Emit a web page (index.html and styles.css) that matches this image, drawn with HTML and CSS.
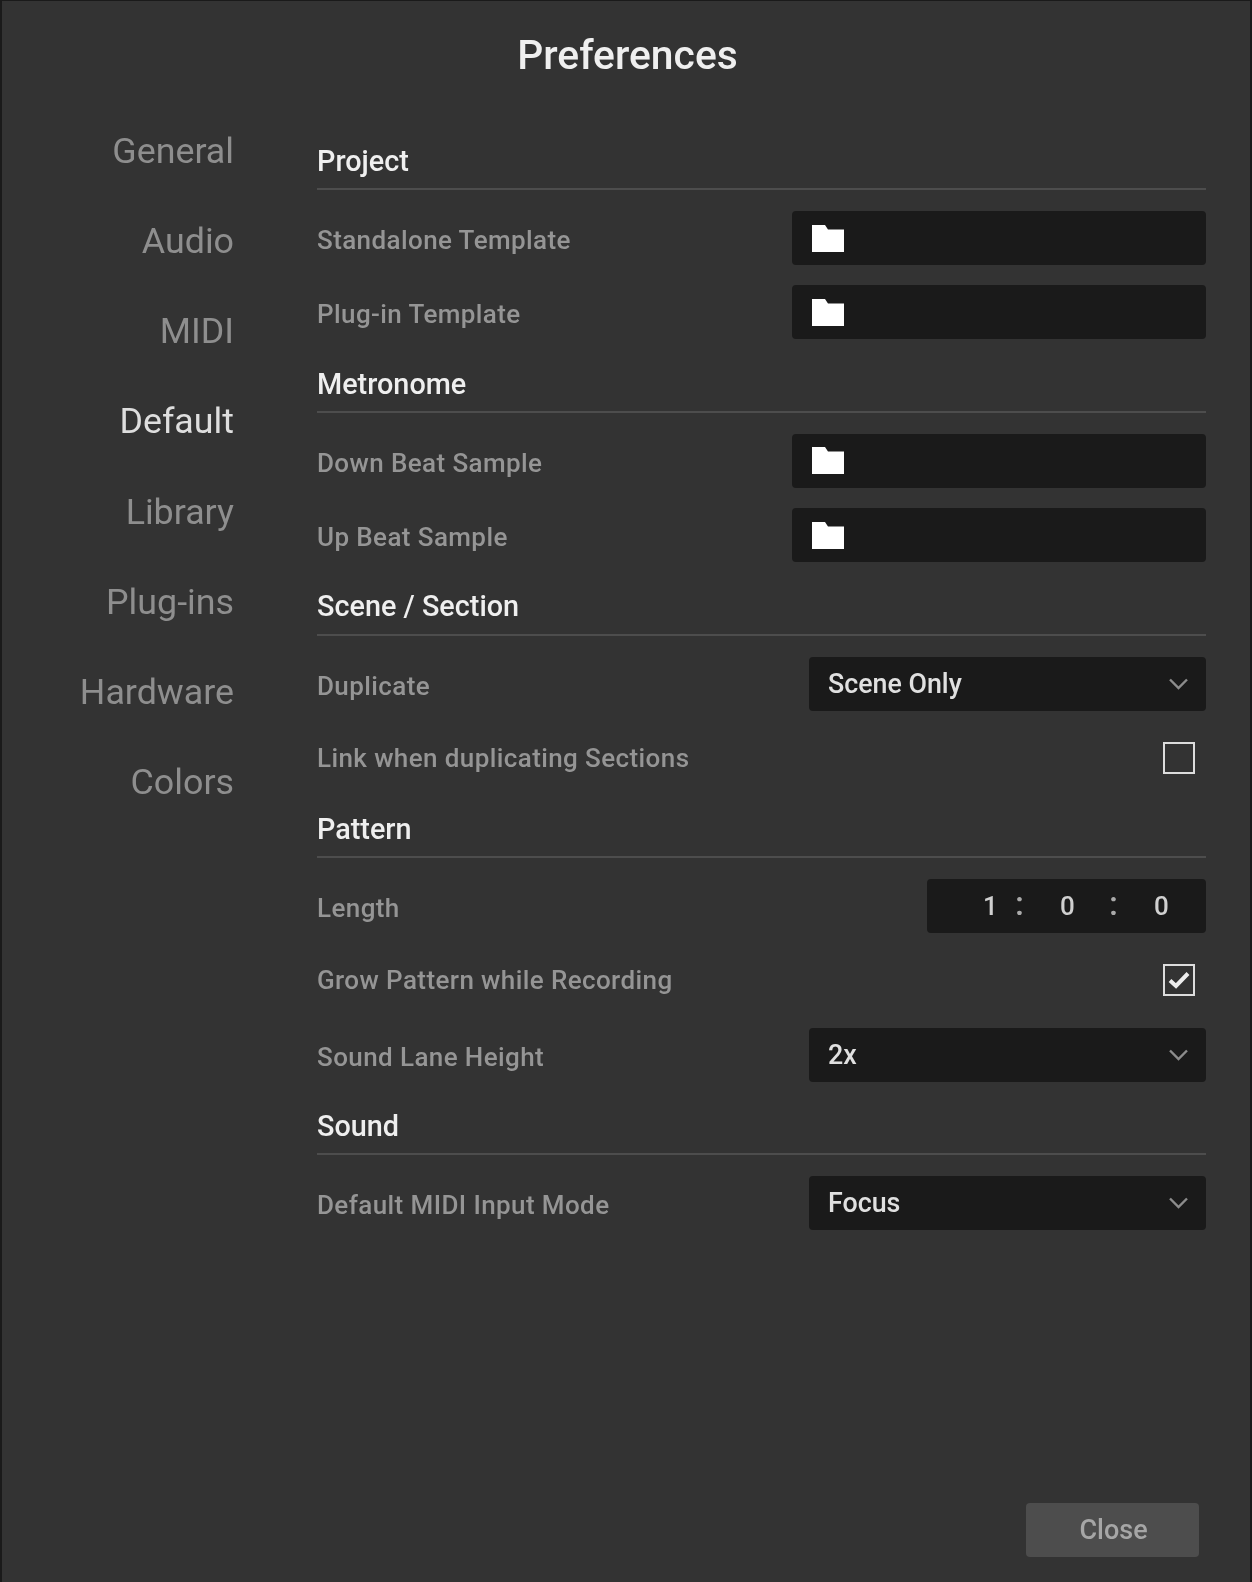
FILE: index.html
```html
<!DOCTYPE html>
<html lang="en">
<head>
<meta charset="utf-8">
<title>Preferences</title>
<link rel="stylesheet" href="styles.css">
</head>
<body>
<div class="dialog">
  <h1 class="title">Preferences</h1>
  <div class="body">
    <nav class="nav">
      <a class="nav-item">General</a>
      <a class="nav-item">Audio</a>
      <a class="nav-item">MIDI</a>
      <a class="nav-item active">Default</a>
      <a class="nav-item">Library</a>
      <a class="nav-item">Plug-ins</a>
      <a class="nav-item">Hardware</a>
      <a class="nav-item">Colors</a>
    </nav>
    <main class="content">
      <section class="section">
        <h2 class="heading">Project</h2>
        <div class="row"><span class="label low">Standalone Template</span><div class="field path"><svg class="folder" viewBox="0 0 32 27"><path d="M0 0H13L16 4.500H32V27H0Z"/></svg></div></div>
        <div class="row"><span class="label low">Plug-in Template</span><div class="field path"><svg class="folder" viewBox="0 0 32 27"><path d="M0 0H13L16 4.500H32V27H0Z"/></svg></div></div>
      </section>
      <section class="section">
        <h2 class="heading">Metronome</h2>
        <div class="row"><span class="label low">Down Beat Sample</span><div class="field path"><svg class="folder" viewBox="0 0 32 27"><path d="M0 0H13L16 4.500H32V27H0Z"/></svg></div></div>
        <div class="row"><span class="label low">Up Beat Sample</span><div class="field path"><svg class="folder" viewBox="0 0 32 27"><path d="M0 0H13L16 4.500H32V27H0Z"/></svg></div></div>
      </section>
      <section class="section">
        <h2 class="heading">Scene / Section</h2>
        <div class="row"><span class="label low">Duplicate</span><div class="field select"><span>Scene Only</span><svg class="chevron" viewBox="0 0 19 12"><path d="M1 1.500L9.500 10L18 1.500"/></svg></div></div>
        <div class="row"><span class="label">Link when duplicating Sections</span><div class="checkbox"></div></div>
      </section>
      <section class="section">
        <h2 class="heading">Pattern</h2>
        <div class="row"><span class="label low">Length</span><div class="field length"><span class="num first">1</span><span class="sep">:</span><span class="num">0</span><span class="sep">:</span><span class="num">0</span></div></div>
        <div class="row"><span class="label">Grow Pattern while Recording</span><div class="checkbox"><svg class="check" viewBox="0 0 22 18"><path d="M2 9.500L8 15L20 2.500"/></svg></div></div>
        <div class="row"><span class="label low">Sound Lane Height</span><div class="field select"><span>2x</span><svg class="chevron" viewBox="0 0 19 12"><path d="M1 1.500L9.500 10L18 1.500"/></svg></div></div>
      </section>
      <section class="section">
        <h2 class="heading">Sound</h2>
        <div class="row"><span class="label low">Default MIDI Input Mode</span><div class="field select"><span>Focus</span><svg class="chevron" viewBox="0 0 19 12"><path d="M1 1.500L9.500 10L18 1.500"/></svg></div></div>
      </section>
    </main>
  </div>
  <footer class="footer"><button class="close">Close</button></footer>
</div>
</body>
</html>
```
FILE: styles.css
```css
* { box-sizing: border-box; }
html, body { margin: 0; height: 100%; background: #1a1a1a; }
body { font-family: Roboto, "Liberation Sans", sans-serif; }
.dialog {
  width: 1252px;
  height: 1582px;
  background: #333333;
  border-left: 2px solid #1a1a1a;
  border-top: 1px solid #1a1a1a;
  border-right: 2px solid #1a1a1a;
  display: flex;
  flex-direction: column;
  filter: blur(0.6px);
}
.title {
  margin: 0;
  height: 109px;
  padding: 29px 0 0 3px;
  text-align: center;
  color: #efefef;
  font-size: 40.800px;
  line-height: 50px;
  font-weight: 500;
}
.body { display: flex; flex: 1; }
.nav {
  width: 232px;
  display: flex;
  flex-direction: column;
  padding-top: 20.200px;
}
.nav-item {
  height: 90.100px;
  line-height: 42px;
  text-align: right;
  font-size: 35.800px;
  color: #8e8e8e;
}
.nav-item.active { color: #dedede; }
.content {
  margin-left: 83px;
  padding-top: 26.900px;
  width: 889px;
}
.heading {
  margin: 0 0 21px;
  height: 53.300px;
  padding-top: 7px;
  border-bottom: 2px solid #4d4d4d;
  color: #efefef;
  font-size: 28.800px;
  line-height: 34px;
  font-weight: 500;
}
.row {
  display: flex;
  align-items: center;
  justify-content: space-between;
  height: 54px;
  margin-bottom: 20.200px;
}
.section:last-child .row:last-child { margin-bottom: 0; }
.label {
  color: #959595;
  font-size: 26px;
  letter-spacing: 0.4px;
  font-weight: 500;
}
.label.low { padding-top: 4px; }
.field {
  height: 54px;
  background: #1a1a1a;
  border-radius: 4px;
  display: flex;
  align-items: center;
  color: #e0e0e0;
  font-size: 26.800px;
}
.path { width: 414px; padding-left: 20px; }
.folder { width: 32px; height: 27px; fill: #ffffff; }
.select { width: 397px; padding: 0 18px 0 19px; justify-content: space-between; font-weight: 500; }
.chevron { width: 19px; height: 12px; fill: none; stroke: #8c8c8c; stroke-width: 2.400; }
.length { width: 279px; color: #d0d0d0; font-weight: 500; font-size: 26px; padding-left: 56px; }
.num { width: 14px; text-align: center; margin-left: 37px; }
.num.first { margin-left: 0; }
.sep { width: 8px; text-align: center; margin-left: 18px; color: #aaaaaa; font-size: 34px; line-height: 34px; padding-bottom: 6px; }
.num + .sep + .num + .sep { margin-left: 35px; }
.checkbox {
  width: 32px;
  height: 32px;
  margin-right: 11px;
  border: 2px solid #dddddd;
  display: flex;
  align-items: center;
  justify-content: center;
}
.check { width: 22px; height: 18px; fill: none; stroke: #eeeeee; stroke-width: 4; }
.footer {
  display: flex;
  justify-content: flex-end;
  padding: 0 51px 25px 0;
}
.close {
  width: 173px;
  height: 54px;
  padding-left: 8px;
  border: 0;
  border-radius: 4px;
  background: #4d4d4d;
  color: #a6a6a6;
  font-family: inherit;
  font-size: 27px;
  font-weight: 500;
}
```
